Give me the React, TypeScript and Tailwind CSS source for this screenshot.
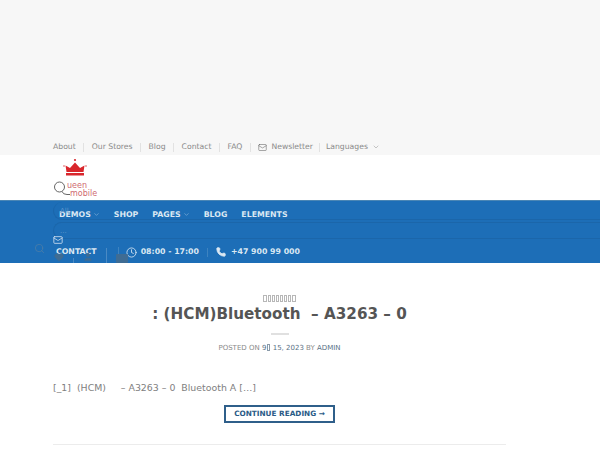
import React from 'react';
import { ChevronDown, Clock, Phone, Search, Heart, User, Mail } from 'lucide-react';

const topLinks = ['About', 'Our Stores', 'Blog', 'Contact', 'FAQ'];
const navLinks = [
  { label: 'DEMOS', caret: true },
  { label: 'SHOP', caret: false },
  { label: 'PAGES', caret: true },
  { label: 'BLOG', caret: false },
  { label: 'ELEMENTS', caret: false },
];

const Tofu: React.FC<{ count: number }> = ({ count }) => (
  <>
    {Array.from({ length: count }).map((_, i) => (
      <span key={i} className="inline-block w-[3.5px] h-[7px] mx-[0.3px] border-[0.7px] border-current opacity-70 align-[-1px]"></span>
    ))}
  </>
);

const Logo: React.FC = () => (
  <div className="relative w-[44px] h-[45px]">
    <svg viewBox="0 0 44 45" className="absolute inset-0 w-[44px] h-[45px]">
      <path d="M13.5 17 L12.5 10.5 L17 13 L22 7.5 L27 13 L31.5 10.5 L30.5 17 Z" fill="#d9262c" />
      <rect x="13" y="18" width="18" height="2.5" fill="#d9262c" />
      <circle cx="22" cy="5" r="1.1" fill="#d9262c" />
      <circle cx="11" cy="11" r="0.7" fill="#d9262c" />
      <circle cx="33" cy="11" r="0.7" fill="#d9262c" />
      <circle cx="6.5" cy="32" r="5" fill="none" stroke="#555" strokeWidth="0.9" />
      <path d="M9 36.5 Q10 39.5 14 39.5 L17 39.5" fill="none" stroke="#555" strokeWidth="0.9" />
    </svg>
    <span className="absolute left-[14px] top-[27px] text-[8px] leading-[8px] text-[#cf6a70]">ueen</span>
    <span className="absolute left-[17px] top-[35px] text-[8px] leading-[8px] text-[#cf6a70]">mobile</span>
  </div>
);

const App: React.FC = () => {
  return (
    <div className="w-[600px] h-[450px] overflow-hidden bg-white font-['DejaVu_Sans',sans-serif]">
      {/* Top bar */}
      <div className="h-[155px] bg-[#f7f7f7] flex items-end pl-[53px] pb-[2px] text-[7.7px] leading-[12px] text-[#8a8a8a]">
        <div className="flex items-center">
          {topLinks.map((link) => (
            <React.Fragment key={link}>
              <span>{link}</span>
              <span className="w-px h-[9px] bg-[#e2e2e2] mx-[7.5px]"></span>
            </React.Fragment>
          ))}
          <Mail size={9} strokeWidth={1.5} className="text-[#666] mr-[4px]" />
          <span>Newsletter</span>
          <span className="w-px h-[9px] bg-[#e2e2e2] mx-[6px]"></span>
          <span>Languages</span>
          <ChevronDown size={8} className="ml-[4px] text-[#aaa]" />
        </div>
      </div>

      {/* Logo row */}
      <div className="h-[45px] bg-white pl-[53px]">
        <Logo />
      </div>

      {/* Blue nav */}
      <div className="relative h-[63px] bg-[#1d6eb7] border-t border-[#4a86b5] pl-[59px] text-[7.8px] font-bold text-[#dbe8f3]">
        <div className="flex h-[27px] items-center">
          {navLinks.map((item) => (
            <div key={item.label} className="flex items-center mr-[14px]">
              <span>{item.label}</span>
              {item.caret && <ChevronDown size={7} className="ml-[2px] text-[#8fb8dc]" />}
            </div>
          ))}
        </div>
        <div className="flex items-center h-[20px] mt-[14px] -ml-[3px]">
          <span>CONTACT</span>
          <span className="w-px h-[11px] bg-[#3d83c0] ml-[21px] mr-[7px]"></span>
          <Clock size={11} strokeWidth={1.8} className="mr-[4px]" />
          <span>08:00 - 17:00</span>
          <span className="w-px h-[9px] bg-[#3d83c0] mx-[8px]"></span>
          <Phone size={10} strokeWidth={2.4} className="mr-[5px]" fill="#dbe8f3" />
          <span>+47 900 99 000</span>
        </div>

        {/* Ghost search form that lies over the nav */}
        <div className="absolute left-[53px] right-0 top-[1px] h-[18px] border-b border-l border-[#1b66aa] rounded-l-[9px] pointer-events-none"></div>
        <div className="absolute left-[53px] right-0 top-[21px] h-[17px] border-y border-l border-[#1b66aa] rounded-l-[9px] pointer-events-none"></div>
        <span className="absolute left-[60px] top-[5px] text-[7px] font-normal text-[#5f97cc]">All</span>
        <span className="absolute left-[60px] top-[25px] text-[7px] font-normal text-[#5f97cc]">...</span>
        <Mail size={10} strokeWidth={2} className="absolute left-[53px] top-[34px] text-[#cfe0f0]" />
        <Search size={11} strokeWidth={1.6} className="absolute left-[34px] top-[42px] text-[#4f7ea6]" />
        <Heart size={10} className="absolute left-[54px] top-[51px] text-[#3f6c93]" fill="#3f6c93" />
        <User size={10} className="absolute left-[83px] top-[51px] text-[#3f6c93]" fill="#3f6c93" />
        <span className="absolute left-[116px] top-[53px] w-[12px] h-[9px] rounded-[1px] bg-[#3f6c93]"></span>
        <span className="absolute left-[73px] top-[57px] w-px h-[5px] bg-[#4a8ac4]"></span>
        <span className="absolute left-[106px] top-[47px] w-px h-[15px] bg-[#4a8ac4]"></span>
      </div>

      {/* Post */}
      <div className="ml-[53px] w-[453px] pt-[31px] text-center">
        <div className="text-[#999] text-[8px] leading-[10px]"><Tofu count={8} /></div>
        <h1 className="-mt-[2px] text-[15.2px] leading-[24px] font-bold text-[#555]">: (HCM)Bluetooth &nbsp;– A3263 – 0</h1>
        <div className="mx-auto mt-[7px] w-[18px] h-[2px] bg-[#e0e0e0]"></div>
        <div className="mt-[8px] text-[7px] leading-[10px] text-[#8a8a8a]">
          POSTED ON <span className="text-[#5a7186]">9<Tofu count={1} /> 15, 2023</span> BY <span className="text-[#5a7186]">ADMIN</span>
        </div>
        <p className="mt-[27px] text-left text-[9.4px] leading-[16px] text-[#808080]">
          [_1] &nbsp;(HCM) &nbsp; &nbsp; – A3263 – 0 &nbsp;Bluetooth A […]
        </p>
        <button className="mt-[9px] h-[18px] w-[111px] border-2 border-[#2f5f8a] text-[7.3px] font-bold text-[#2a5a86]">
          CONTINUE READING →
        </button>
        <div className="mt-[21px] h-px bg-[#ececec]"></div>
      </div>
    </div>
  );
};

export default App;
